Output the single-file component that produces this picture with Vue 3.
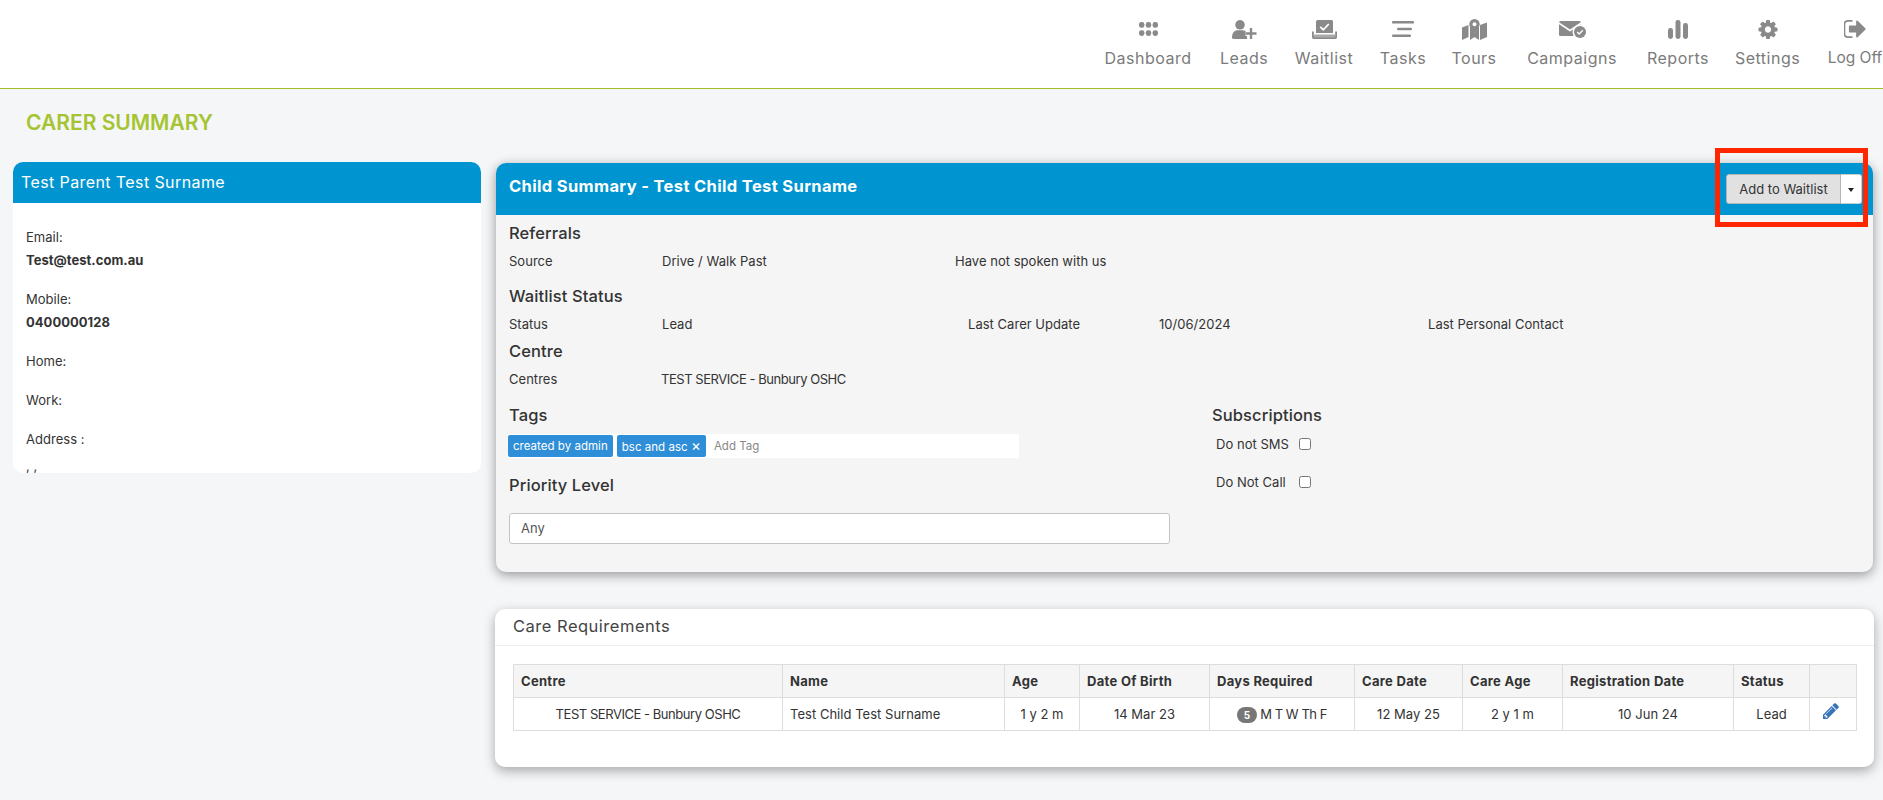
<script setup>
const navItems = [
  { label: 'Dashboard', icon: 'dashboard' },
  { label: 'Leads', icon: 'leads' },
  { label: 'Waitlist', icon: 'waitlist' },
  { label: 'Tasks', icon: 'tasks' },
  { label: 'Tours', icon: 'tours' },
  { label: 'Campaigns', icon: 'campaigns' },
  { label: 'Reports', icon: 'reports' },
  { label: 'Settings', icon: 'settings' },
  { label: 'Log Off', icon: 'logoff' }
];

const contacts = [
  { label: 'Email:', value: 'Test@test.com.au' },
  { label: 'Mobile:', value: '0400000128' },
  { label: 'Home:' },
  { label: 'Work:' },
  { label: 'Address :', text: ', ,' }
];

const columns = [
  { title: 'Centre', value: 'TEST SERVICE - Bunbury OSHC', width: 269, tight: true },
  { title: 'Name', value: 'Test Child Test Surname', width: 222, left: true },
  { title: 'Age', value: '1 y 2 m', width: 75 },
  { title: 'Date Of Birth', value: '14 Mar 23', width: 130 },
  { title: 'Days Required', value: 'M T W Th F', width: 145, badge: '5', tight: true },
  { title: 'Care Date', value: '12 May 25', width: 108 },
  { title: 'Care Age', value: '2 y 1 m', width: 100 },
  { title: 'Registration Date', value: '10 Jun 24', width: 171 },
  { title: 'Status', value: 'Lead', width: 76 },
  { title: '', width: 47, edit: true }
];
</script>

<template>
  <div class="page">
    <header class="topbar">
      <nav class="nav">
        <a v-for="item in navItems" :key="item.label" class="nav-item">
          <span class="nav-icon">
            <svg v-if="item.icon === 'dashboard'" width="19" height="14" viewBox="0 0 19 14">
              <rect x="0" y="0" width="5.4" height="5.8" rx="2.4" />
              <rect x="6.8" y="0" width="5.4" height="5.8" rx="2.4" />
              <rect x="13.6" y="0" width="5.4" height="5.8" rx="2.4" />
              <rect x="0" y="8.2" width="5.4" height="5.8" rx="2.4" />
              <rect x="6.8" y="8.2" width="5.4" height="5.8" rx="2.4" />
              <rect x="13.6" y="8.2" width="5.4" height="5.8" rx="2.4" />
            </svg>
            <svg v-else-if="item.icon === 'leads'" width="25" height="19" viewBox="0 0 25 19">
              <circle cx="8" cy="4.8" r="4.8" />
              <path d="M0 17.300C0 12.500 2.800 10.200 5.500 10.200h5c2 0 3.500.7 4.500 1.800V19H1.700A1.700 1.700 0 0 1 0 17.300z" />
              <path d="M19 8v11M13.500 13.500h11" stroke="#fff" stroke-width="5" fill="none" />
              <path d="M19 8v11M13.500 13.500h11" stroke="#8a8a8a" stroke-width="2.400" fill="none" />
            </svg>
            <svg v-else-if="item.icon === 'waitlist'" width="25" height="19" viewBox="0 0 25 19">
              <path d="M5.500 0h14A1.500 1.500 0 0 1 21 1.500V13H4V1.500A1.500 1.500 0 0 1 5.500 0z" />
              <path d="M8.300 6.800l3 3 5.500-5.800" stroke="#fff" stroke-width="1.800" fill="none" />
              <path d="M0 11.500h1.800v4.300h21.400v-4.300H25v5.800a1.700 1.700 0 0 1-1.700 1.700H1.700A1.700 1.700 0 0 1 0 17.300z" />
              <rect x="1.800" y="14.500" width="21.400" height="3" fill="#aaa" />
            </svg>
            <svg v-else-if="item.icon === 'tasks'" width="22" height="16" viewBox="0 0 22 16">
              <rect x="0" y="0" width="22" height="2.600" rx="1.200" />
              <rect x="5" y="6.700" width="15" height="2.600" rx="1.200" />
              <rect x="0" y="13.400" width="19" height="2.600" rx="1.200" />
            </svg>
            <svg v-else-if="item.icon === 'tours'" width="25" height="21" viewBox="0 0 25 21">
              <path d="M0 8.500l6.500-2.500V18L0 21zM18 6l7-2.500v14.500L18 21zM8 6.500l4.500 8 4.500-8V21l-4.500-3-4.500 3z" />
              <path fill-rule="evenodd" d="M12.500 0a5.200 5.200 0 0 1 5.200 5.200c0 2.800-3.500 7.300-5.200 9.300-1.700-2-5.200-6.500-5.200-9.300A5.200 5.200 0 0 1 12.500 0zm0 3.200a2 2 0 1 0 0 4 2 2 0 0 0 0-4z" />
            </svg>
            <svg v-else-if="item.icon === 'campaigns'" width="27" height="17" viewBox="0 0 27 17">
              <rect x="0" y="0" width="22" height="15" rx="1.600" />
              <path d="M-1 1.500l12 8 12-8" stroke="#fff" stroke-width="1.600" fill="none" />
              <circle cx="21" cy="11" r="7.500" fill="#fff" />
              <circle cx="21" cy="11" r="6" />
              <path d="M18.200 11l2 2 3.600-3.800" stroke="#fff" stroke-width="1.300" fill="none" />
            </svg>
            <svg v-else-if="item.icon === 'reports'" width="20" height="19" viewBox="0 0 20 19">
              <rect x="0" y="8" width="5" height="11" rx="2.400" />
              <rect x="7.500" y="0" width="5" height="19" rx="2.400" />
              <rect x="15" y="3" width="5" height="16" rx="2.400" />
            </svg>
            <svg v-else-if="item.icon === 'settings'" width="20" height="19" viewBox="128 128 1536 1536">
              <path d="M1152 896q0-106-75-181t-181-75-181 75-75 181 75 181 181 75 181-75 75-181zm512-109v222q0 12-8 23t-20 13l-185 28q-19 54-39 91 35 50 107 138 10 12 10 25t-9 23q-27 37-99 108t-94 71q-12 0-26-9l-138-108q-44 23-91 38-16 136-29 186-7 28-36 28h-222q-14 0-24.500-8.500t-11.500-21.500l-28-184q-49-16-90-37l-141 107q-10 9-25 9-14 0-25-11-126-114-165-168-7-10-7-23 0-12 8-23 15-21 51-66.500t54-70.500q-27-50-41-99l-183-27q-13-2-21-12.500t-8-23.500v-222q0-12 8-23t19-13l186-28q14-46 39-92-40-57-107-138-10-12-10-24 0-10 9-23 26-36 98.500-107.500t94.500-71.500q13 0 26 10l138 107q44-23 91-38 16-136 29-186 7-28 36-28h222q14 0 24.500 8.500t11.500 21.500l28 184q49 16 90 37l142-107q9-9 24-9 13 0 25 10 129 119 165 170 7 8 7 22 0 12-8 23-15 21-51 66.500t-54 70.500q26 50 41 98l183 28q13 2 21 12.500t8 23.500z" />
            </svg>
            <svg v-else width="22" height="18" viewBox="128 256 1504 1280">
              <path d="M704 1440q0 4 1 20t.5 26.500-3 23.500-10 19.500-20.500 6.500h-320q-119 0-203.500-84.500t-84.500-203.500v-704q0-119 84.500-203.500t203.500-84.500h320q13 0 22.500 9.500t9.500 22.500q0 4 1 20t.5 26.500-3 23.500-10 19.500-20.500 6.500h-320q-66 0-113 47t-47 113v704q0 66 47 113t113 47h312l11.500 1 11.500 3 8 5.500 7 9 2 13.500zm928-544q0 26-19 45l-544 544q-19 19-45 19t-45-19-19-45v-288h-448q-26 0-45-19t-19-45v-384q0-26 19-45t45-19h448v-288q0-26 19-45t45-19 45 19l544 544q19 19 19 45z" />
            </svg>
          </span>
          <span class="nav-label">{{ item.label }}</span>
        </a>
      </nav>
    </header>

    <h1 class="page-title">CARER SUMMARY</h1>

    <main class="layout">
      <aside class="carer-card">
        <div class="carer-head">Test Parent Test Surname</div>
        <div class="carer-body">
          <div v-for="row in contacts" :key="row.label" class="contact">
            <div>{{ row.label }}</div>
            <div v-if="row.value" class="contact-value">{{ row.value }}</div>
            <div v-if="row.text" class="contact-text">{{ row.text }}</div>
          </div>
        </div>
      </aside>

      <div class="right-col">
        <section class="child-card">
          <div class="child-head">
            <span class="child-title">Child Summary - Test Child Test Surname</span>
            <div class="btn-group">
              <button class="btn-main">Add to Waitlist</button>
              <button class="btn-caret"><span class="caret"></span></button>
            </div>
          </div>
          <div class="child-body">
            <h3 class="section-head">Referrals</h3>
            <div class="info-row referral-row">
              <span>Source</span>
              <span>Drive / Walk Past</span>
              <span>Have not spoken with us</span>
            </div>
            <h3 class="section-head waitlist-head">Waitlist Status</h3>
            <div class="info-row status-row">
              <span>Status</span>
              <span>Lead</span>
              <span class="carer-update">Last Carer Update</span>
              <span>10/06/2024</span>
              <span>Last Personal Contact</span>
            </div>
            <h3 class="section-head centre-head">Centre</h3>
            <div class="info-row centre-row">
              <span>Centres</span>
              <span class="tight">TEST SERVICE - Bunbury OSHC</span>
            </div>
            <div class="lower">
              <div class="lower-left">
                <h3 class="section-head">Tags</h3>
                <div class="tag-input">
                  <span class="tag">created by admin</span>
                  <span class="tag">bsc and asc <span class="tag-x">×</span></span>
                  <span class="tag-placeholder">Add Tag</span>
                </div>
                <h3 class="section-head priority-head">Priority Level</h3>
                <div class="select-box">Any</div>
              </div>
              <div class="lower-right">
                <h3 class="section-head">Subscriptions</h3>
                <label class="sub-row first"><span>Do not SMS</span><input type="checkbox" /></label>
                <label class="sub-row"><span>Do Not Call</span><input type="checkbox" /></label>
              </div>
            </div>
          </div>
        </section>

        <section class="care-card">
          <div class="care-head">Care Requirements</div>
          <div class="care-body">
            <table class="care-table">
              <colgroup>
                <col v-for="col in columns" :key="col.title" :style="{ width: col.width + 'px' }" />
              </colgroup>
              <thead>
                <tr><th v-for="col in columns" :key="col.title">{{ col.title }}</th></tr>
              </thead>
              <tbody>
                <tr>
                  <td
                    v-for="col in columns"
                    :key="col.title"
                    :class="{ 'cell-left': col.left, tight: col.tight, 'cell-edit': col.edit }"
                  >
                    <span v-if="col.badge" class="badge">{{ col.badge }}</span>
                    {{ col.value }}
                    <svg v-if="col.edit" class="pencil" width="16" height="16" viewBox="128 128 1536 1536">
                      <path d="M491 1536l91-91-235-235-91 91v107h128v128h107zm523-928q0-22-22-22-10 0-17 7l-542 542q-7 7-7 17 0 22 22 22 10 0 17-7l542-542q7-7 7-17zm-54-192l416 416-832 832h-416v-416zm683 96q0 53-37 90l-166 166-416-416 166-165q36-38 90-38 53 0 91 38l235 234q37 39 37 91z" />
                    </svg>
                  </td>
                </tr>
              </tbody>
            </table>
          </div>
        </section>
      </div>
    </main>

    <!-- red annotation box from the screenshot -->
    <div class="annotation"></div>
  </div>
</template>

<style>
html, body {
  margin: 0;
  background: #f5f6f8;
}
</style>

<style scoped>
.page {
  position: relative;
  width: 1883px;
  height: 800px;
  overflow: hidden;
  background: #f5f6f8;
  font-family: Inter, "Noto Sans", sans-serif;
  font-size: 13px;
  line-height: 20px;
  letter-spacing: 0.03px;
  color: #333;
}

.tight {
  letter-spacing: -0.45px;
}

.topbar {
  height: 88px;
  background: #fff;
  border-bottom: 1px solid #a0bf2a;
}

.nav {
  display: grid;
  grid-template-columns: 92px 46px 60px 44px 44px 98px 60px 65px 56px;
  column-gap: 27px;
  justify-content: end;
  height: 100%;
}

.nav-item {
  display: flex;
  flex-direction: column;
  align-items: center;
  color: #7b7b7b;
}

.nav-icon {
  height: 30px;
  margin-top: 14px;
  display: flex;
  align-items: center;
  justify-content: center;
}

.nav-icon svg {
  fill: #8a8a8a;
}

.nav-label {
  margin-top: 4px;
  font-size: 16px;
  line-height: 20px;
  letter-spacing: 0.5px;
  white-space: nowrap;
}

.nav-item:last-child .nav-label {
  font-size: 15.5px;
  letter-spacing: 0;
}

.page-title {
  margin: 19px 0 0 26px;
  font-size: 21px;
  line-height: 30px;
  font-weight: 600;
  letter-spacing: 0;
  color: #a5c432;
}

.layout {
  display: flex;
  align-items: flex-start;
  margin: 24px 0 0 13px;
  gap: 15px;
}

.carer-card {
  width: 468px;
  height: 311px;
  background: #fff;
  border-radius: 10px;
  overflow: hidden;
  flex-shrink: 0;
}

.carer-head {
  height: 41px;
  background: #0095d0;
  color: #fff;
  font-size: 16px;
  line-height: 41px;
  letter-spacing: 0.4px;
  padding-left: 8px;
}

.carer-body {
  padding: 24px 13px 0;
}

.contact {
  margin-bottom: 19px;
}

.contact-value {
  margin-top: 3px;
  font-weight: 700;
}

.contact-text {
  margin-top: 7px;
}

.right-col {
  width: 1377px;
  margin-top: 1px;
}

.child-card {
  height: 409px;
  background: #f5f5f5;
  border-radius: 10px;
  box-shadow: 0 3px 12px rgba(0, 0, 0, 0.4);
  overflow: hidden;
}

.child-head {
  height: 52px;
  display: flex;
  align-items: center;
  justify-content: space-between;
  background: #0095d0;
  padding: 0 11px 0 13px;
}

.child-title {
  color: #fff;
  font-size: 16.5px;
  font-weight: 700;
  letter-spacing: 0.35px;
  padding-bottom: 6px;
}

.btn-group {
  display: flex;
  height: 30px;
}

.btn-main {
  width: 115px;
  height: 30px;
  padding: 0;
  font: inherit;
  color: #333;
  background: #e1e1e1;
  border: 1px solid #b5b5b5;
  border-radius: 3px 0 0 3px;
}

.btn-caret {
  width: 21px;
  height: 30px;
  padding: 0;
  background: #fff;
  border: 1px solid #ccc;
  border-left: 0;
  border-radius: 0 3px 3px 0;
}

.caret {
  display: inline-block;
  vertical-align: middle;
  border-top: 4px solid #222;
  border-left: 3.5px solid transparent;
  border-right: 3.5px solid transparent;
}

.child-body {
  padding: 6px 13px 0;
}

.section-head {
  margin: 0;
  font-size: 16.5px;
  line-height: 24px;
  font-weight: 500;
  letter-spacing: 0.1px;
  color: #333;
}

.waitlist-head {
  margin-top: 13px;
}

.centre-head {
  margin-top: 5px;
}

.priority-head {
  margin-top: 15px;
}

.info-row {
  display: grid;
  margin-top: 6px;
}

.referral-row {
  grid-template-columns: 153px 293px 1fr;
}

.status-row {
  grid-template-columns: 153px 306px 191px 269px 1fr;
}

.centre-row {
  grid-template-columns: 152px 1fr;
}

.lower {
  display: flex;
  margin-top: 14px;
}

.lower-left {
  width: 661px;
}

.tag-input {
  display: flex;
  align-items: center;
  gap: 4px;
  width: 511px;
  height: 24px;
  margin: 7px 0 0 -1px;
  background: #fff;
}

.tag {
  height: 22px;
  padding: 0 5px;
  background: #2f8ed8;
  color: #fff;
  font-size: 11.5px;
  line-height: 22px;
  border-radius: 2px;
  white-space: nowrap;
}

.tag-x {
  font-size: 15px;
}

.tag-placeholder {
  margin-left: 4px;
  color: #888;
  font-size: 11.5px;
}

.select-box {
  width: 661px;
  height: 31px;
  margin-top: 16px;
  box-sizing: border-box;
  padding-left: 11px;
  background: #fff;
  border: 1px solid #c4c4c4;
  border-radius: 3px;
  line-height: 29px;
  color: #555;
}

.lower-right {
  margin-left: 42px;
}

.sub-row {
  display: flex;
  align-items: center;
  margin: 18px 0 0 4px;
}

.sub-row.first {
  margin-top: 7px;
}

.sub-row span {
  width: 83px;
}

.sub-row input {
  width: 12px;
  height: 12px;
  margin: 0;
}

.care-card {
  height: 158px;
  margin: 37px -1px 0;
  background: #fff;
  border-radius: 10px;
  box-shadow: 0 4px 12px rgba(0, 0, 0, 0.32);
}

.care-head {
  height: 36px;
  padding-left: 18px;
  border-bottom: 1px solid #eee;
  font-size: 16.5px;
  line-height: 35px;
  letter-spacing: 0.5px;
  color: #444;
}

.care-body {
  padding: 18px 18px 0;
}

.care-table {
  table-layout: fixed;
  width: 1343px;
  border-collapse: collapse;
}

.care-table th,
.care-table td {
  border: 1px solid #ddd;
  height: 33px;
  padding: 0 7px;
  box-sizing: border-box;
}

.care-table th {
  background: #f5f5f5;
  text-align: left;
  font-weight: 700;
  letter-spacing: 0.3px;
}

.care-table td {
  text-align: center;
  white-space: nowrap;
}

.care-table td.cell-left {
  text-align: left;
}

.care-table td.cell-edit {
  text-align: left;
  padding-left: 13px;
}

.badge {
  display: inline-block;
  width: 20px;
  height: 16px;
  border-radius: 8px;
  background: #777;
  color: #fff;
  font-size: 10px;
  font-weight: 700;
  line-height: 16px;
  letter-spacing: 0;
  vertical-align: middle;
}

.pencil {
  fill: #3a74b8;
  vertical-align: middle;
  margin-bottom: 6px;
}

.annotation {
  position: absolute;
  left: 1715px;
  top: 148px;
  width: 153px;
  height: 79px;
  box-sizing: border-box;
  border: 5px solid #ff2600;
}
</style>
